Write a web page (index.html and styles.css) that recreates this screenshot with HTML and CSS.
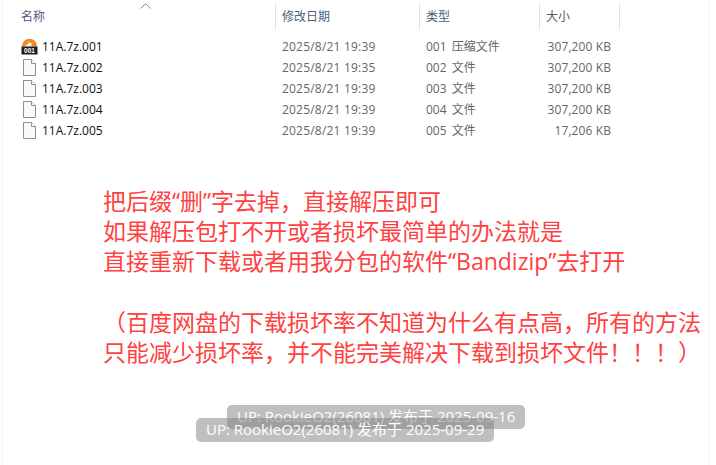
FILE: index.html
```html
<!DOCTYPE html>
<html lang="zh-CN">
<head>
    <meta charset="UTF-8">
    <title>11A.7z</title>
    <link rel="stylesheet" href="styles.css">
</head>
<body>
    <div class="page">
        <div class="explorer">
            <span class="sort-arrow">
                <svg width="11" height="6" viewBox="0 0 11 6"><path d="M.5 5.500 5.500.8l5 4.700" fill="none" stroke="#8a8a8a"/></svg>
            </span>
            <div class="head">
                <div class="col-name">名称</div>
                <div class="col-date">修改日期</div>
                <div class="col-type">类型</div>
                <div class="col-size">大小</div>
            </div>
            <div class="rows">
                <div class="row">
                    <div class="col-name">
                        <svg class="ico" width="17" height="17" viewBox="0 0 17 17">
                            <path d="M.8 8.500a7.700 7.700 0 0 1 15.400 0z" fill="#f28c1e"/>
                            <path d="M3.500 8.500 8.300 5 6.300 3.200l5 2.800-1.800 1 2.500 1.500z" fill="#fff"/>
                            <rect x=".5" y="8.500" width="16" height="8" fill="#1c1c1c"/>
                            <text class="ico-num" x="8.500" y="15.200">001</text>
                        </svg>
                        11A.7z.001
                    </div>
                    <div class="col-date">2025/8/21 19:39</div>
                    <div class="col-type">001 压缩文件</div>
                    <div class="col-size">307,200 KB</div>
                </div>
                <div class="row">
                    <div class="col-name">
                        <svg class="ico" width="17" height="17" viewBox="0 0 17 17"><path d="M2.500.5h8l4 4v12h-12z" fill="#f9f9f9" stroke="#8f8f8f"/><path d="M10.500.5v4h4" fill="#fff" stroke="#8f8f8f"/></svg>
                        11A.7z.002
                    </div>
                    <div class="col-date">2025/8/21 19:35</div>
                    <div class="col-type">002 文件</div>
                    <div class="col-size">307,200 KB</div>
                </div>
                <div class="row">
                    <div class="col-name">
                        <svg class="ico" width="17" height="17" viewBox="0 0 17 17"><path d="M2.500.5h8l4 4v12h-12z" fill="#f9f9f9" stroke="#8f8f8f"/><path d="M10.500.5v4h4" fill="#fff" stroke="#8f8f8f"/></svg>
                        11A.7z.003
                    </div>
                    <div class="col-date">2025/8/21 19:39</div>
                    <div class="col-type">003 文件</div>
                    <div class="col-size">307,200 KB</div>
                </div>
                <div class="row">
                    <div class="col-name">
                        <svg class="ico" width="17" height="17" viewBox="0 0 17 17"><path d="M2.500.5h8l4 4v12h-12z" fill="#f9f9f9" stroke="#8f8f8f"/><path d="M10.500.5v4h4" fill="#fff" stroke="#8f8f8f"/></svg>
                        11A.7z.004
                    </div>
                    <div class="col-date">2025/8/21 19:39</div>
                    <div class="col-type">004 文件</div>
                    <div class="col-size">307,200 KB</div>
                </div>
                <div class="row">
                    <div class="col-name">
                        <svg class="ico" width="17" height="17" viewBox="0 0 17 17"><path d="M2.500.5h8l4 4v12h-12z" fill="#f9f9f9" stroke="#8f8f8f"/><path d="M10.500.5v4h4" fill="#fff" stroke="#8f8f8f"/></svg>
                        11A.7z.005
                    </div>
                    <div class="col-date">2025/8/21 19:39</div>
                    <div class="col-type">005 文件</div>
                    <div class="col-size">17,206 KB</div>
                </div>
            </div>
        </div>

        <div class="note">
            <p>把后缀“删”字去掉，直接解压即可</p>
            <p>如果解压包打不开或者损坏最简单的办法就是</p>
            <p>直接重新下载或者用我分包的软件“Bandizip”去打开</p>
            <p>&nbsp;</p>
            <p>（百度网盘的下载损坏率不知道为什么有点高，所有的方法</p>
            <p>只能减少损坏率，并不能完美解决下载到损坏文件！！！）</p>
        </div>

        <div class="tag tag-back">UP: RookieO2(26081) 发布于 2025-09-16</div>
        <div class="tag tag-front">UP: RookieO2(26081) 发布于 2025-09-29</div>
    </div>
</body>
</html>
```

FILE: styles.css
```css
* {
    box-sizing: border-box;
}

body {
    margin: 0;
    padding-left: 2px;
    background: #fff;
    font-family: "Noto Sans CJK SC", "Liberation Sans", sans-serif;
}

.page {
    position: relative;
    width: 707px;
    height: 465px;
    overflow: hidden;
    border-left: 1px solid #f5f5f5;
    border-right: 1px solid #f3f3f3;
}

.explorer {
    position: relative;
    height: 145px;
    padding-top: 3px;
    font-family: "Open Sans", "Noto Sans CJK SC", sans-serif;
    font-size: 12px;
}

.sort-arrow {
    position: absolute;
    left: 137px;
    top: 3px;
    line-height: 0;
}

.head,
.row {
    display: grid;
    grid-template-columns: 273px 144px 120px 80px;
    white-space: nowrap;
}

.head {
    height: 27px;
    line-height: 27px;
    color: #4c607a;
}

.head > div {
    border-right: 1px solid #e3e3e3;
    padding-left: 6px;
}

.head .col-name {
    padding-left: 18px;
}

.rows {
    padding-top: 6px;
}

.row {
    height: 21px;
    line-height: 21px;
    color: #666;
}

.row > div {
    padding-left: 6px;
}

.row .col-name {
    display: flex;
    align-items: center;
    gap: 4px;
    padding-left: 18px;
    color: #111;
}

.row .col-date {
    letter-spacing: 0.2px;
}

.row .col-type {
    word-spacing: 2px;
}

.row .col-size {
    padding: 0 9px 0 0;
    text-align: right;
    letter-spacing: 0.1px;
}

.ico {
    flex: none;
}

.ico-num {
    fill: #fff;
    font-family: "Liberation Sans", sans-serif;
    font-size: 6.5px;
    font-weight: 700;
    text-anchor: middle;
}

.note {
    padding: 41px 0 0 100px;
    color: #ff4141;
    font-family: "Open Sans", "Noto Sans CJK SC", sans-serif;
    font-size: 23px;
    line-height: 30.2px;
    white-space: nowrap;
}

.note p {
    margin: 0;
}

.tag {
    position: absolute;
    height: 24px;
    padding: 0 10px;
    border-radius: 5px;
    background: rgba(128, 128, 128, 0.5);
    color: #fff;
    font-family: "Open Sans", "Noto Sans CJK SC", sans-serif;
    font-size: 15px;
    line-height: 22px;
    white-space: nowrap;
}

.tag-back {
    left: 224px;
    top: 405px;
}

.tag-front {
    left: 193px;
    top: 418px;
}
```
